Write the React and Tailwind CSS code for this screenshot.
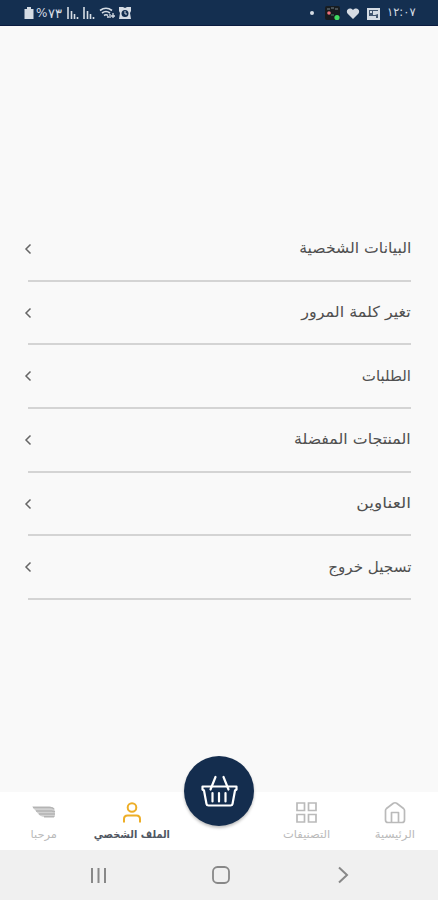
const menuItems = [
  { label: 'البيانات الشخصية', scale: 'scale-x-[1.045]' },
  { label: 'تغير كلمة المرور', scale: 'scale-x-[1.065]' },
  { label: 'الطلبات', scale: 'scale-x-[1]' },
  { label: 'المنتجات المفضلة', scale: 'scale-x-[1.055]' },
  { label: 'العناوين', scale: 'scale-x-[1.14]' },
  { label: 'تسجيل خروج', scale: 'scale-x-[1.01]' },
];

function StatusBar() {
  return (
    <header className="flex h-[26px] items-center justify-between border-b border-[#0b1c40] bg-[#142f50] pl-[24px] pr-[23px] pt-px text-[#d5dce4]">
      <div className="flex items-center">
        <svg width="10" height="14" viewBox="0 0 10 14" fill="currentColor">
          <path d="M3 1h4v2h2.500v10H.5V3H3z" />
        </svg>
        <span className="ml-[2px] w-[10px] text-[12px] leading-none">%</span>
        <span className="ml-[2px] w-[15px] text-[13px] leading-none">٧٣</span>
        {[0, 1].map((n) => (
          <svg key={n} className="ml-[3px]" width="13" height="14" viewBox="0 0 13 14" fill="none" stroke="currentColor" strokeWidth="1.6">
            <path d="M2 1v12M5.500 5v8M8.500 8v5M11.500 11v2" />
          </svg>
        ))}
        <svg className="ml-[4px]" width="17" height="14" viewBox="0 0 17 14" fill="none" stroke="currentColor" strokeWidth="1.6">
          <path d="M1 4.500Q7 0 13 4.500M3 7q4-3 8 0M5 9.500q2-1.500 4 0" />
          <path d="M8 11h2M11 8v4M14 7v5M12 10h4" strokeWidth="1.3" />
        </svg>
        <svg className="ml-[2px]" width="14" height="14" viewBox="0 0 14 14">
          <path d="M1 1h4l2 1 2-1h4v4l-1 2 1 6H1l1-6-1-2z" fill="currentColor" />
          <circle cx="7" cy="7.500" r="3.500" fill="#142f50" />
          <path d="M7 5v3h2" fill="none" stroke="currentColor" />
        </svg>
      </div>
      <div className="flex items-center">
        <span className="size-[4px] rounded-full bg-current" />
        <svg className="ml-[11px]" width="15" height="15" viewBox="0 0 15 15">
          <rect width="15" height="14" rx="2" fill="#171c20" />
          <path d="M2 3h3M6 2h3M10 3h3" stroke="#78838a" />
          <circle cx="4" cy="7" r="1.800" fill="#ed6f7a" />
          <path d="M6 9h3" stroke="#4b8461" />
          <circle cx="12" cy="11.500" r="2.600" fill="#40dc61" />
        </svg>
        <svg className="ml-[6px]" width="14" height="13" viewBox="0 0 14 13" fill="currentColor">
          <path d="M7 12 1.500 6.500C-.8 3 3.500-.8 7 3c3.500-3.800 7.800 0 5.500 3.500z" />
        </svg>
        <svg className="ml-[7px]" width="13" height="13" viewBox="0 0 13 13">
          <path d="M0 1h13v12H0z" fill="currentColor" />
          <path d="M2 3h9v8H2z" fill="#42566f" />
          <path d="M3 4h2v2H3zM6 4h5v3l-3 1H6zM2 9h7v2H2z" fill="currentColor" />
        </svg>
        <span className="ml-[7px] w-[28px] whitespace-nowrap text-[11.5px] leading-none">١٢:٠٧</span>
      </div>
    </header>
  );
}

function MenuRow({ item }) {
  return (
    <li className="ml-[24px] mr-[27px] h-[63.7px]">
      <button className="flex h-full w-full flex-row-reverse items-center justify-between">
        <span dir="rtl" className={`origin-right whitespace-nowrap text-[15px] leading-none text-[#505050] ${item.scale}`}>
          {item.label}
        </span>
        <svg width="8" height="12" viewBox="0 0 8 12" fill="none" stroke="#666" strokeWidth="1.5">
          <path d="M6.500 1.500 2 6l4.500 4.500" />
        </svg>
      </button>
      <div className="-mt-px ml-[4px] h-[2px] bg-[#d4d4d4]" />
    </li>
  );
}

function NavItem({ label, className, labelClass, children }) {
  return (
    <button className={`flex flex-col items-center pt-[8px] ${className}`}>
      <span className="flex h-[24px] items-center justify-center">{children}</span>
      <span dir="rtl" className={`mt-[4px] whitespace-nowrap text-[11px] leading-[14px] ${labelClass}`}>
        {label}
      </span>
    </button>
  );
}

function BottomNav() {
  return (
    <nav className="relative flex h-[58px] bg-white text-[#bababa]">
      <NavItem label="مرحبا" className="w-[88px]" labelClass="scale-x-[1.04]">
        <svg width="24" height="12" viewBox="0 0 24 12">
          <path d="M0 .5h17q4 0 5.500 2.500l.5 8H13Q8 11 5.500 7z" fill="#d2d2d2" />
          <path d="M1 1.500h17q2.500 0 4 1.500M4 5h15.500l3.500.7M7 8h16M12 10.800h10" fill="none" stroke="#b4b4b4" strokeWidth="1.5" />
        </svg>
      </NavItem>
      <NavItem label="الملف الشخصي" className="w-[88px] text-[#505762]" labelClass="scale-x-[0.89] font-bold">
        <svg width="20" height="21" viewBox="0 0 20 21" fill="none" stroke="#edae27" strokeWidth="2">
          <circle cx="10" cy="5.500" r="4.300" />
          <path d="M2 20.500V17q0-3.500 3.500-3.500h9q3.500 0 3.500 3.500v3.500" />
        </svg>
      </NavItem>
      <div className="w-[86px]" />
      <NavItem label="التصنيفات" className="w-[89px]" labelClass="scale-x-[1.04]">
        <svg width="21" height="21" viewBox="0 0 21 21" fill="none" stroke="currentColor" strokeWidth="1.700">
          <path d="M1 1h7.500v7.500H1zM12.500 1H20v7.500h-7.500zM1 12.500h7.500V20H1zM12.500 12.500H20V20h-7.500z" />
        </svg>
      </NavItem>
      <NavItem label="الرئيسية" className="w-[87px]" labelClass="scale-x-[1.06]">
        <svg width="22" height="23" viewBox="0 0 22 23" fill="none" stroke="currentColor" strokeWidth="1.700" strokeLinejoin="round">
          <path d="M1.500 9.500q0-1 1-2l6.500-5q2-1.500 4 0l6.500 5q1 1 1 2V19q0 2.500-2.500 2.500H4q-2.500 0-2.500-2.500z" />
          <path d="M7.500 21.500V11.500h7v10" />
        </svg>
      </NavItem>
      <button className="absolute left-[184px] top-[-36px] flex size-[70px] items-center justify-center rounded-full bg-[#142d4e] shadow-[0_2px_3px_rgba(0,0,0,0.25)]">
        <svg width="38" height="34" viewBox="0 0 38 34" fill="none" stroke="white" strokeWidth="2.200" strokeLinejoin="round" strokeLinecap="round">
          <path d="M2.500 12.500h34v3l-1.500 1-2.500 13.500q-.3 1.500-2 1.500H8.500q-1.700 0-2-1.500L4 16.500l-1.500-1z" />
          <path d="M10.500 15.500 15.500 3M28.500 15.500 23.500 3" />
          <path d="M12.500 19v8.500M19 19v8.500M25.500 19v8.500" />
        </svg>
      </button>
    </nav>
  );
}

function SystemBar() {
  return (
    <footer className="flex h-[50px] items-center bg-[#f0f0f0] pl-[90px] text-[#888]">
      <svg width="17" height="17" viewBox="0 0 17 17" fill="none" stroke="currentColor" strokeWidth="2">
        <path d="M2 1v15M8.500 1v15M15 1v15" />
      </svg>
      <svg className="ml-[105px]" width="18" height="18" viewBox="0 0 18 18" fill="none" stroke="currentColor" strokeWidth="1.800">
        <rect x="1" y="1" width="16" height="16" rx="4.500" />
      </svg>
      <svg className="ml-[107px]" width="12" height="18" viewBox="0 0 12 18" fill="none" stroke="currentColor" strokeWidth="2">
        <path d="m2 1.500 8 7.500-8 7.500" />
      </svg>
    </footer>
  );
}

function App() {
  return (
    <div className="flex h-[900px] w-full flex-col overflow-hidden bg-[#f9f9f9] font-['DejaVu_Sans',sans-serif]">
      <StatusBar />
      <main className="flex-1 pt-[191px]">
        <ul>
          {menuItems.map((item) => (
            <MenuRow key={item.label} item={item} />
          ))}
        </ul>
      </main>
      <BottomNav />
      <SystemBar />
    </div>
  );
}

export default App;
